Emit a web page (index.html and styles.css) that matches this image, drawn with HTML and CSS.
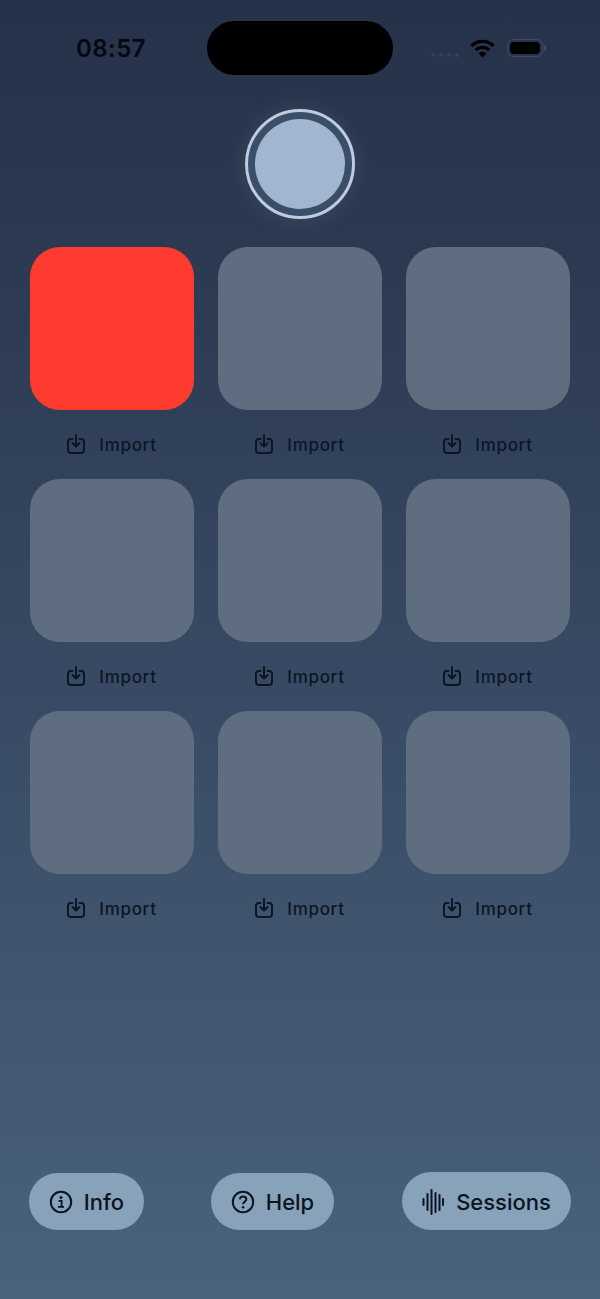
FILE: index.html
```html
<!DOCTYPE html>
<html lang="en">
<head>
<meta charset="utf-8">
<title>Soundboard</title>
<link rel="stylesheet" href="styles.css">
</head>
<body>
<main class="screen">
  <header class="status">
    <span class="time">08:57</span>
    <div class="island"></div>
    <div class="status-icons">
      <div class="signal"><i></i><i></i><i></i><i></i></div>
      <svg class="wifi" width="25" height="19" viewBox="0 0 25 19"><path d="M1.500 6.800C7.800.9 17.200.9 23.500 6.800" fill="none" stroke="#000" stroke-width="3.200"/><path d="M5.700 11c3.900-3.500 9.700-3.500 13.600 0" fill="none" stroke="#000" stroke-width="3.200"/><path d="M8.600 14.200c2.300-1.900 5.500-1.900 7.800 0L12.500 18.600z" fill="#000"/></svg>
      <div class="battery"><div class="battery-fill"></div></div>
      <div class="battery-cap"></div>
    </div>
  </header>

  <div class="record-wrap"><div class="record"><div class="record-core"></div></div></div>

  <section class="grid">
    <div class="pad"><div class="tile tile-active"></div><div class="import"><svg class="imp-icon" viewBox="0 0 18 20"><use href="#imp"/></svg><span>Import</span></div></div>
    <div class="pad"><div class="tile"></div><div class="import"><svg class="imp-icon" viewBox="0 0 18 20"><use href="#imp"/></svg><span>Import</span></div></div>
    <div class="pad"><div class="tile"></div><div class="import"><svg class="imp-icon" viewBox="0 0 18 20"><use href="#imp"/></svg><span>Import</span></div></div>
    <div class="pad"><div class="tile"></div><div class="import"><svg class="imp-icon" viewBox="0 0 18 20"><use href="#imp"/></svg><span>Import</span></div></div>
    <div class="pad"><div class="tile"></div><div class="import"><svg class="imp-icon" viewBox="0 0 18 20"><use href="#imp"/></svg><span>Import</span></div></div>
    <div class="pad"><div class="tile"></div><div class="import"><svg class="imp-icon" viewBox="0 0 18 20"><use href="#imp"/></svg><span>Import</span></div></div>
    <div class="pad"><div class="tile"></div><div class="import"><svg class="imp-icon" viewBox="0 0 18 20"><use href="#imp"/></svg><span>Import</span></div></div>
    <div class="pad"><div class="tile"></div><div class="import"><svg class="imp-icon" viewBox="0 0 18 20"><use href="#imp"/></svg><span>Import</span></div></div>
    <div class="pad"><div class="tile"></div><div class="import"><svg class="imp-icon" viewBox="0 0 18 20"><use href="#imp"/></svg><span>Import</span></div></div>
  </section>

  <nav class="actions">
    <button class="pill pill-info">
      <svg class="pill-icon" viewBox="0 0 24 24"><circle cx="12" cy="12" r="10.200" fill="none" stroke="#0b1421" stroke-width="2"/><circle cx="12" cy="7.400" r="1.500" fill="#0b1421"/><path d="M9.600 10.800h3v6M9 16.800h6" fill="none" stroke="#0b1421" stroke-width="1.800"/></svg>
      <span>Info</span>
    </button>
    <button class="pill pill-help">
      <svg class="pill-icon" viewBox="0 0 24 24"><circle cx="12" cy="12" r="10.200" fill="none" stroke="#0b1421" stroke-width="2"/><path d="M8.800 9.400c.2-1.900 1.500-2.900 3.300-2.900 1.900 0 3.200 1.100 3.200 2.700 0 2.400-3.200 2.400-3.200 5" fill="none" stroke="#0b1421" stroke-width="2"/><circle cx="12.100" cy="17.300" r="1.300" fill="#0b1421"/></svg>
      <span>Help</span>
    </button>
    <button class="pill pill-sessions">
      <svg class="wave-icon" viewBox="0 0 22 26"><path d="M1.500 10v6M5.500 5v16M9.500 1v24M13.500 4v19M17.500 6v15M21 10v6" fill="none" stroke="#0b1421" stroke-width="2" stroke-linecap="round"/></svg>
      <span>Sessions</span>
    </button>
  </nav>
</main>

<svg class="defs" width="0" height="0">
  <symbol id="imp" viewBox="0 0 18 20">
    <path d="M5.500 5H4A3 3 0 0 0 1 8v8a3 3 0 0 0 3 3h10a3 3 0 0 0 3-3V8a3 3 0 0 0-3-3h-1.500" fill="none" stroke="#0c1524" stroke-width="2" stroke-linecap="round"/>
    <path d="M9 1v11.500M5.500 9 9 12.500 12.500 9" fill="none" stroke="#0c1524" stroke-width="2" stroke-linecap="round" stroke-linejoin="round"/>
  </symbol>
</svg>
</body>
</html>
```
FILE: styles.css
```css
* { box-sizing: border-box; }
html, body { margin: 0; padding: 0; }
body { width: 600px; height: 1299px; overflow: hidden; font-family: Inter, "Liberation Sans", sans-serif; }

.screen {
  width: 600px;
  height: 1299px;
  display: flex;
  flex-direction: column;
  background: linear-gradient(180deg, #26324a 0%, #2a374f 15%, #4a627c 100%);
}

.status {
  height: 54px;
  margin-top: 21px;
  display: flex;
  align-items: center;
}
.time {
  width: 207px;
  padding-left: 15px;
  text-align: center;
  font-size: 24px;
  font-weight: 600;
  color: #05080f;
  letter-spacing: .4px;
}
.island { width: 186px; height: 54px; border-radius: 27px; background: #000; }
.status-icons {
  flex: 1;
  display: flex;
  align-items: center;
  padding-left: 38px;
}
.signal { display: flex; gap: 4px; margin-top: 14px; margin-right: 11px; }
.signal i { width: 4px; height: 4px; border-radius: 2px; background: #34435d; display: block; }
.wifi { margin-right: 12px; }
.battery {
  width: 36px;
  height: 18px;
  padding: 2px;
  border: 1px solid #3b4a66;
  border-radius: 6px;
}
.battery-fill { width: 100%; height: 100%; background: #000; border-radius: 4px; }
.battery-cap { width: 2px; height: 6px; margin-left: 1px; border-radius: 0 2px 2px 0; background: #3b4a66; }

.record-wrap { display: flex; justify-content: center; margin-top: 34px; }
.record {
  width: 110px;
  height: 110px;
  border-radius: 50%;
  border: 3px solid #bfccdb;
  background: #3b4e69;
  box-shadow: 0 0 24px rgba(140, 170, 200, .16);
  display: flex;
  align-items: center;
  justify-content: center;
}
.record-core { width: 90px; height: 90px; border-radius: 50%; background: #a2b7cf; }

.grid {
  margin-top: 28px;
  padding: 0 30px;
  display: grid;
  grid-template-columns: repeat(3, 164px);
  column-gap: 24px;
  row-gap: 23px;
}
.pad { display: flex; flex-direction: column; align-items: center; }
.tile { width: 164px; height: 163px; border-radius: 30px; background: #5e6d7f; }
.tile-active { background: #ff3b2f; }
.import {
  margin-top: 24px;
  height: 22px;
  display: flex;
  align-items: center;
  gap: 14px;
  font-size: 17px;
  font-weight: 500;
  letter-spacing: .7px;
  color: #0c1524;
}
.imp-icon { width: 18px; height: 20px; display: block; margin-top: -2px; }
.defs { position: absolute; }

.actions {
  margin-top: auto;
  margin-bottom: 69px;
  padding: 0 29px;
  display: flex;
  justify-content: space-between;
  align-items: center;
}
.pill {
  height: 57px;
  border: 0;
  border-radius: 29px;
  background: #88a2ba;
  color: #0b1421;
  font-family: inherit;
  font-size: 22px;
  font-weight: 500;
  display: flex;
  align-items: center;
  justify-content: center;
  padding: 1px 0 0;
}
.pill-info { width: 115px; gap: 11px; }
.pill-help { width: 123px; margin-right: 1px; gap: 11px; }
.pill-sessions { width: 169px; height: 58px; gap: 12px; }
.pill-icon { width: 24px; height: 24px; display: block; }
.wave-icon { width: 22px; height: 26px; display: block; }
```
